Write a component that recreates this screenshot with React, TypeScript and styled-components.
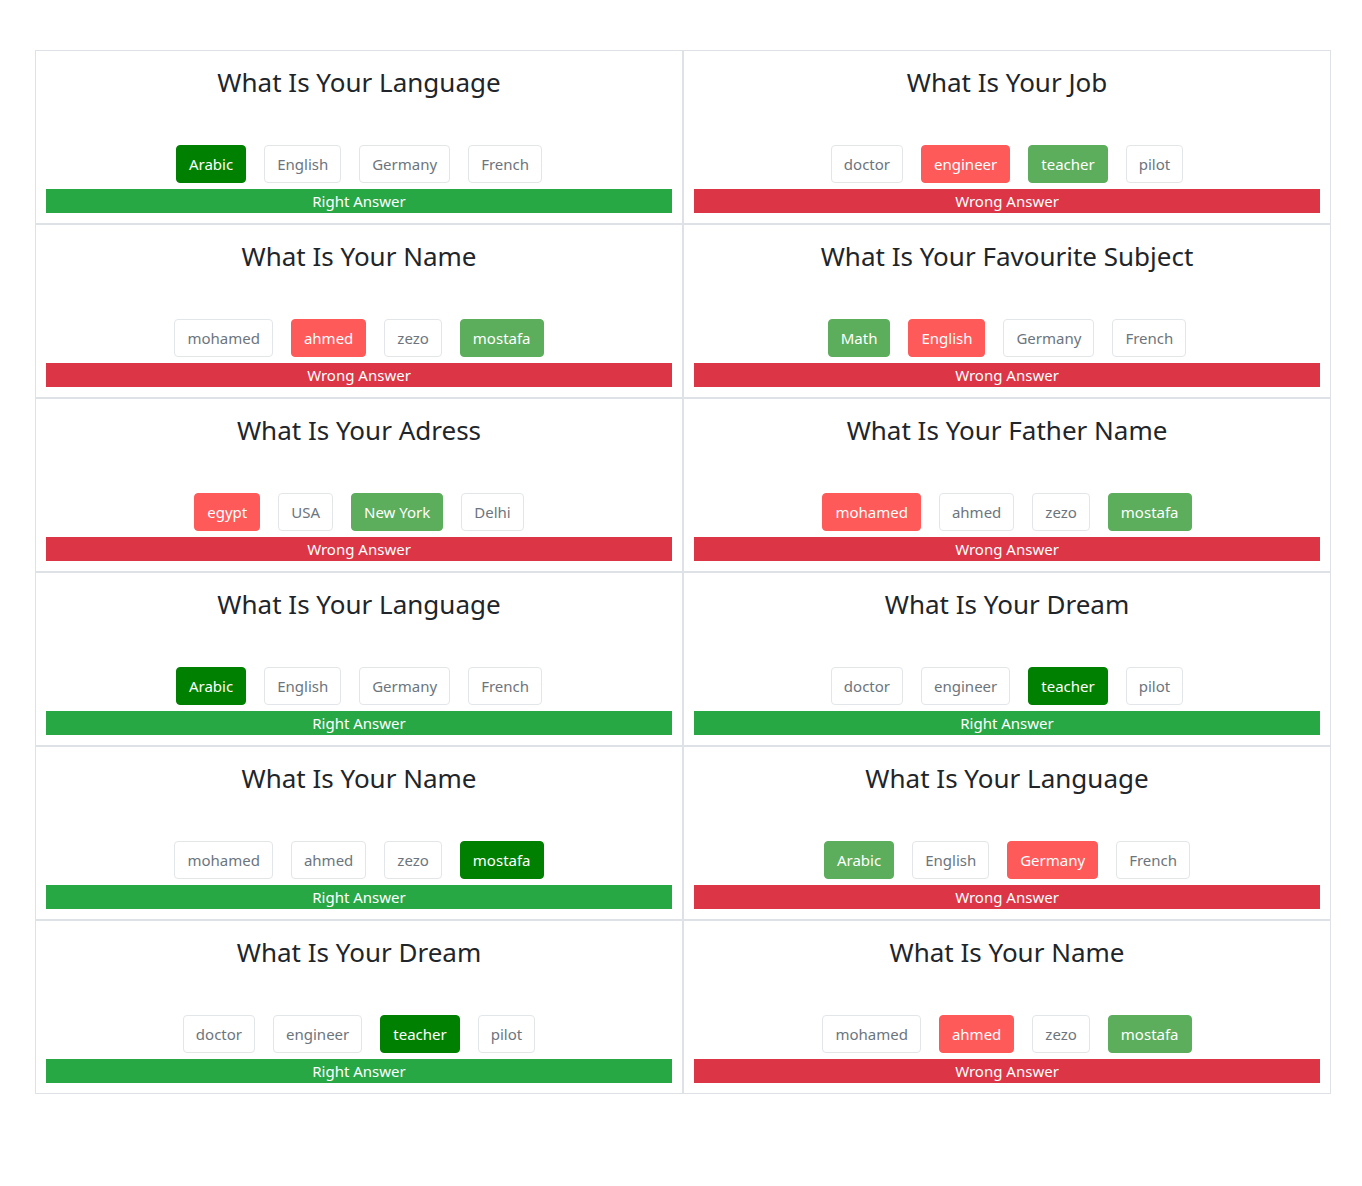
import React from "react";
import styled, { createGlobalStyle } from "styled-components";

const Global = createGlobalStyle`
  * { box-sizing: border-box; }
  body { margin: 0; background: #fff; font-family: "Segoe UI", "Noto Sans", "Liberation Sans", sans-serif; color: #212529; }
`;

type Kind = "plain" | "chosenRight" | "chosenWrong" | "correct";

interface Question {
  title: string;
  options: { label: string; kind: Kind }[];
  right: boolean;
}

const q = (title: string, labels: string[], kinds: Kind[], right: boolean): Question => ({
  title,
  options: labels.map((label, i) => ({ label, kind: kinds[i] })),
  right,
});

const P: Kind = "plain";
const R: Kind = "chosenRight";
const W: Kind = "chosenWrong";
const C: Kind = "correct";

const questions: Question[] = [
  q("What Is Your Language", ["Arabic", "English", "Germany", "French"], [R, P, P, P], true),
  q("What Is Your Job", ["doctor", "engineer", "teacher", "pilot"], [P, W, C, P], false),
  q("What Is Your Name", ["mohamed", "ahmed", "zezo", "mostafa"], [P, W, P, C], false),
  q("What Is Your Favourite Subject", ["Math", "English", "Germany", "French"], [C, W, P, P], false),
  q("What Is Your Adress", ["egypt", "USA", "New York", "Delhi"], [W, P, C, P], false),
  q("What Is Your Father Name", ["mohamed", "ahmed", "zezo", "mostafa"], [W, P, P, C], false),
  q("What Is Your Language", ["Arabic", "English", "Germany", "French"], [R, P, P, P], true),
  q("What Is Your Dream", ["doctor", "engineer", "teacher", "pilot"], [P, P, R, P], true),
  q("What Is Your Name", ["mohamed", "ahmed", "zezo", "mostafa"], [P, P, P, R], true),
  q("What Is Your Language", ["Arabic", "English", "Germany", "French"], [C, P, W, P], false),
  q("What Is Your Dream", ["doctor", "engineer", "teacher", "pilot"], [P, P, R, P], true),
  q("What Is Your Name", ["mohamed", "ahmed", "zezo", "mostafa"], [P, W, P, C], false),
];

const Page = styled.div`
  padding: 50px 0 0 35px;
`;

const Grid = styled.div`
  width: 1296px;
  display: grid;
  grid-template-columns: 1fr 1fr;
`;

const Card = styled.div`
  border: 1px solid #dee2e6;
  padding: 10px;
  display: flex;
  flex-direction: column;
  align-items: stretch;
`;

const Title = styled.h2`
  margin: 4px 0 46px;
  font-size: 26px;
  font-weight: 400;
  line-height: 34px;
  text-align: center;
  color: #212529;
`;

const Options = styled.div`
  display: flex;
  justify-content: center;
  gap: 18px;
  margin-bottom: 6px;
`;

const bg: Record<Kind, string> = {
  plain: "#fff",
  chosenRight: "#008000",
  chosenWrong: "#ff5a5a",
  correct: "#5cad5c",
};

const Option = styled.button<{ $kind: Kind }>`
  height: 38px;
  padding: 0 12px;
  font-family: inherit;
  font-size: 15px;
  line-height: 24px;
  border-radius: 4px;
  border: 1px solid ${(p) => (p.$kind === "plain" ? "#e3e6e9" : bg[p.$kind])};
  background: ${(p) => bg[p.$kind]};
  color: ${(p) => (p.$kind === "plain" ? "#6c757d" : "#fff")};
  cursor: pointer;
`;

const Result = styled.div<{ $right: boolean }>`
  height: 24px;
  line-height: 24px;
  text-align: center;
  font-size: 15px;
  color: #fff;
  background: ${(p) => (p.$right ? "#28a745" : "#dc3545")};
`;

export default function App() {
  return (
    <Page>
      <Global />
      <Grid>
        {questions.map((item, i) => (
          <Card key={i}>
            <Title>{item.title}</Title>
            <Options>
              {item.options.map((o) => (
                <Option key={o.label} $kind={o.kind}>
                  {o.label}
                </Option>
              ))}
            </Options>
            <Result $right={item.right}>{item.right ? "Right Answer" : "Wrong Answer"}</Result>
          </Card>
        ))}
      </Grid>
    </Page>
  );
}
